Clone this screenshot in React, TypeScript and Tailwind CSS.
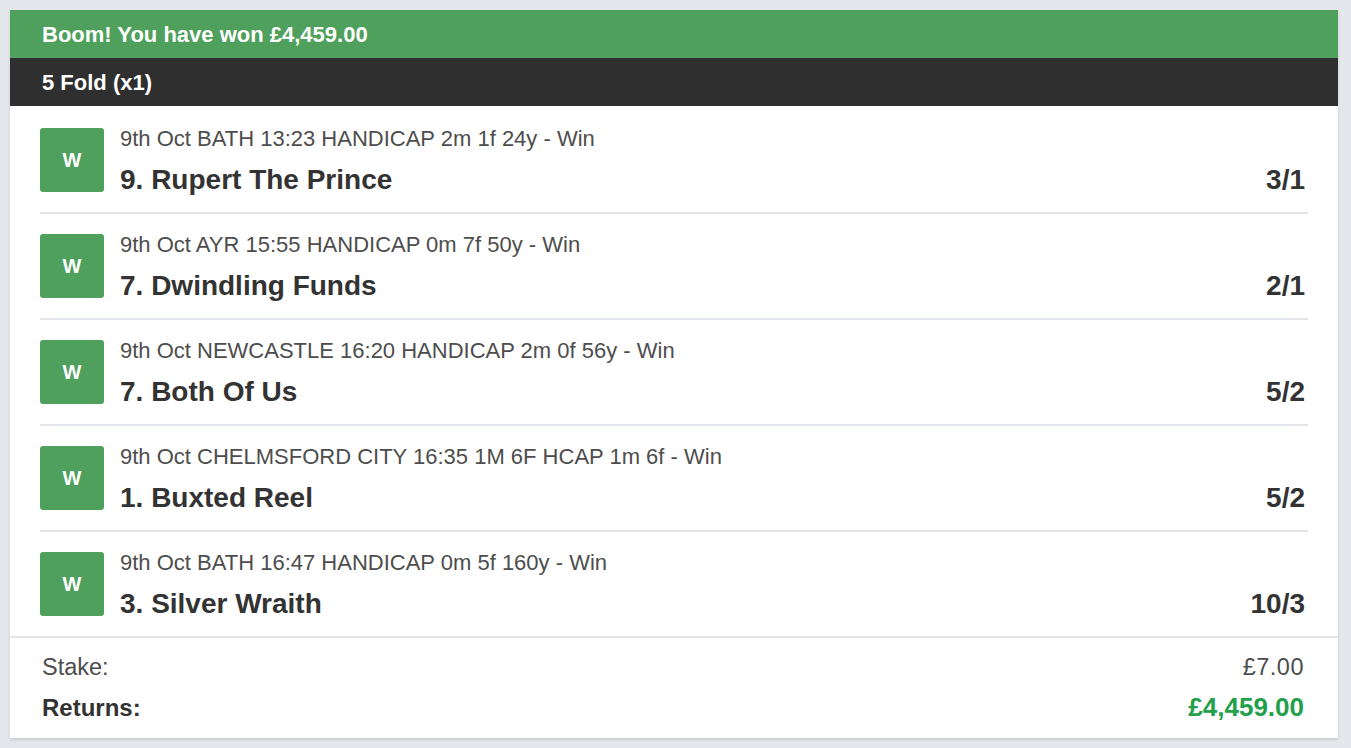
import React from "react";

const legs = [
  { meta: "9th Oct BATH 13:23 HANDICAP 2m 1f 24y - Win", name: "9. Rupert The Prince", odds: "3/1" },
  { meta: "9th Oct AYR 15:55 HANDICAP 0m 7f 50y - Win", name: "7. Dwindling Funds", odds: "2/1" },
  { meta: "9th Oct NEWCASTLE 16:20 HANDICAP 2m 0f 56y - Win", name: "7. Both Of Us", odds: "5/2" },
  { meta: "9th Oct CHELMSFORD CITY 16:35 1M 6F HCAP 1m 6f - Win", name: "1. Buxted Reel", odds: "5/2" },
  { meta: "9th Oct BATH 16:47 HANDICAP 0m 5f 160y - Win", name: "3. Silver Wraith", odds: "10/3" },
];

export default function App() {
  return (
    <div
      className="min-h-screen bg-[#e4e8ec] pt-[10px] pb-[10px]"
      style={{ fontFamily: '"Liberation Sans", Arial, Helvetica, sans-serif' }}
    >
      <div className="ml-[10px] w-[1328px] bg-white shadow-[0_2px_3px_rgba(0,0,0,0.12)]">
        <div className="h-[48px] bg-[#4ea05c] flex items-center pl-[32px] text-white font-bold text-[22px]">
          Boom! You have won £4,459.00
        </div>
        <div className="h-[48px] bg-[#2f2f2f] flex items-center pl-[32px] text-white font-bold text-[22px]">
          5 Fold (x1)
        </div>
        <div className="mx-[30px] pt-[2px]">
          {legs.map((l, i) => (
            <div
              key={i}
              className={`flex items-start gap-[16px] py-[20px] pr-[3px] ${i < legs.length - 1 ? "border-b-2 border-[#e2e6ea]" : ""}`}
            >
              <div className="w-[64px] h-[64px] shrink-0 rounded-[3px] bg-[#4ea05c] flex items-center justify-center text-white font-bold text-[20px]">
                W
              </div>
              <div className="flex-1 min-w-0 h-[64px]">
                <div className="text-[22px] leading-[22px] text-[#4d4d4d]">{l.meta}</div>
                <div className="flex justify-between items-baseline mt-[18px] text-[28px] leading-[24px] font-bold text-[#333333]">
                  <span>{l.name}</span>
                  <span>{l.odds}</span>
                </div>
              </div>
            </div>
          ))}
        </div>
        <div className="border-t-2 border-[#e2e6ea] pl-[32px] pr-[34px] pt-[16px] pb-[16px]">
          <div className="flex justify-between text-[23.5px] leading-[26px] text-[#4d4d4d]">
            <span>Stake:</span>
            <span className="tracking-[0.5px]">£7.00</span>
          </div>
          <div className="flex justify-between items-baseline mt-[13px] leading-[28px] font-bold">
            <span className="text-[24px] text-[#333333]">Returns:</span>
            <span className="text-[26px] text-[#22a04b]">£4,459.00</span>
          </div>
        </div>
      </div>
    </div>
  );
}
